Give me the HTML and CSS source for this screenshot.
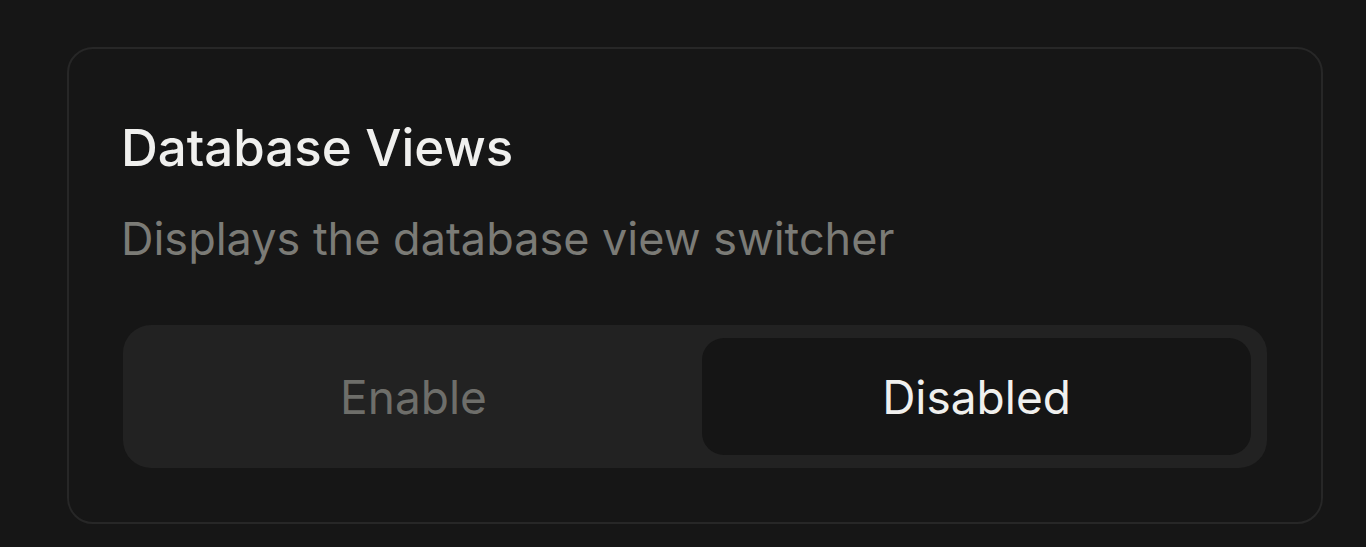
FILE: index.html
```html
<!DOCTYPE html>
<html lang="en">
<head>
    <meta charset="UTF-8">
    <meta name="viewport" content="width=device-width, initial-scale=1.0">
    <title>Database Views</title>
    <link rel="stylesheet" href="styles.css">
</head>
<body>
    <div class="card">
        <h2 class="card-title">Database Views</h2>
        <p class="card-desc">Displays the database view switcher</p>

        <div class="segmented">
            <button class="segment">Enable</button>
            <button class="segment active">Disabled</button>
        </div>
    </div>
</body>
</html>
```

FILE: styles.css
```css
:root {
    --bg-color: #161616;
    --card-border: #272727;
    --track-bg: #222222;
    --active-bg: #151515;
    --title-color: #f0f0ee;
    --muted-color: #7b7b76;
    --off-color: #6e6e6a;
}

body {
    margin: 0;
    padding: 47px 43px 0 67px;
    background-color: var(--bg-color);
    font-family: Inter, "Noto Sans", sans-serif;
    overflow: hidden;
}

.card {
    border: 2px solid var(--card-border);
    border-radius: 26px;
    padding: 69px 54px 54px;
}

.card-title {
    margin: 0 0 0 -2px;
    font-size: 51px;
    font-weight: 500;
    line-height: 60px;
    color: var(--title-color);
}

.card-desc {
    margin: 34px 0 0 -2px;
    font-size: 45px;
    line-height: 54px;
    color: var(--muted-color);
}

.segmented {
    display: grid;
    grid-template-columns: 1fr 1fr;
    gap: 14px;
    margin-top: 59px;
    padding: 13px 16px;
    background-color: var(--track-bg);
    border-radius: 28px;
}

.segment {
    height: 117px;
    border: none;
    border-radius: 22px;
    background: transparent;
    font-family: inherit;
    font-size: 46px;
    color: var(--off-color);
    cursor: pointer;
}

.segment.active {
    background-color: var(--active-bg);
    color: var(--title-color);
}
```
